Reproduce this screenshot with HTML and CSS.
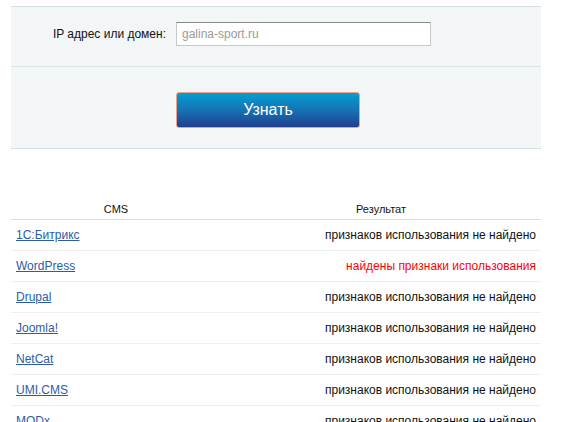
FILE: index.html
```html
<!DOCTYPE html>
<html lang="ru">
<head>
<meta charset="utf-8">
<link rel="stylesheet" href="styles.css">
</head>
<body>
<div class="wrap">
  <form class="panel">
    <div class="panel-row row-input">
      <label class="label" for="host">IP адрес или домен:</label>
      <input class="field" id="host" type="text" placeholder="galina-sport.ru">
    </div>
    <div class="panel-row row-button">
      <button class="btn" type="button">Узнать</button>
    </div>
  </form>

  <table class="results">
    <thead>
      <tr><th class="col-cms">CMS</th><th class="col-res">Результат</th></tr>
    </thead>
    <tbody>
      <tr><td><a href="#">1С:Битрикс</a></td><td class="res">признаков использования не найдено</td></tr>
      <tr><td><a href="#">WordPress</a></td><td class="res found">найдены признаки использования</td></tr>
      <tr><td><a href="#">Drupal</a></td><td class="res">признаков использования не найдено</td></tr>
      <tr><td><a href="#">Joomla!</a></td><td class="res">признаков использования не найдено</td></tr>
      <tr><td><a href="#">NetCat</a></td><td class="res">признаков использования не найдено</td></tr>
      <tr><td><a href="#">UMI.CMS</a></td><td class="res">признаков использования не найдено</td></tr>
      <tr><td><a href="#">MODx</a></td><td class="res">признаков использования не найдено</td></tr>
    </tbody>
  </table>
</div>
</body>
</html>
```

FILE: styles.css
```css
html, body {
  margin: 0;
  padding: 0;
  background: #fff;
}
body {
  font-family: "Liberation Sans", Arial, sans-serif;
  color: #111;
  font-size: 12px;
}
.wrap {
  width: 530px;
  margin-left: 11px;
  padding-top: 6px;
}
.panel {
  margin: 0;
  background: #f3f6f7;
  border-top: 1px solid #d3dfe2;
  border-bottom: 1px solid #d3dfe2;
}
.panel-row {
  display: flex;
  align-items: center;
}
.row-input {
  padding: 15px 0 20px 0;
  border-bottom: 1px solid #dbe4e7;
}
.label {
  width: 155px;
  text-align: right;
  margin-right: 10px;
  font-size: 12px;
  color: #111;
}
.field {
  box-sizing: border-box;
  width: 255px;
  height: 24px;
  margin: 0;
  padding: 0 5px;
  border: 1px solid #c8c8c8;
  border-top-color: #8a8a8a;
  background: #fff;
  font-family: "Liberation Sans", Arial, sans-serif;
  font-size: 12px;
  outline: none;
}
.field::placeholder {
  color: #9a9a9a;
}
.row-button {
  padding: 25px 0 20px 165px;
}
.btn {
  box-sizing: border-box;
  width: 184px;
  height: 36px;
  margin: 0;
  padding: 0;
  border: 1px solid #f0a080;
  border-radius: 3px;
  background: linear-gradient(to bottom, #039ed3 0%, #1673b4 50%, #213f8e 100%);
  color: #fff;
  font-family: "Liberation Sans", Arial, sans-serif;
  font-size: 16px;
  cursor: pointer;
}
.results {
  width: 530px;
  margin-top: 50px;
  border-collapse: collapse;
}
.results th {
  font-weight: normal;
  font-size: 11px;
  height: 20px;
  padding: 0;
  border-bottom: 1px solid #dcdcdc;
  text-align: center;
}
.col-cms {
  width: 210px;
}
.results td {
  height: 30px;
  padding: 0 5px;
  border-bottom: 1px solid #eeeeee;
  font-size: 12px;
}
.results a {
  color: #2a5caa;
  text-decoration: underline;
}
.res {
  text-align: right;
  color: #111;
}
.res.found {
  color: #ff0000;
}
```
